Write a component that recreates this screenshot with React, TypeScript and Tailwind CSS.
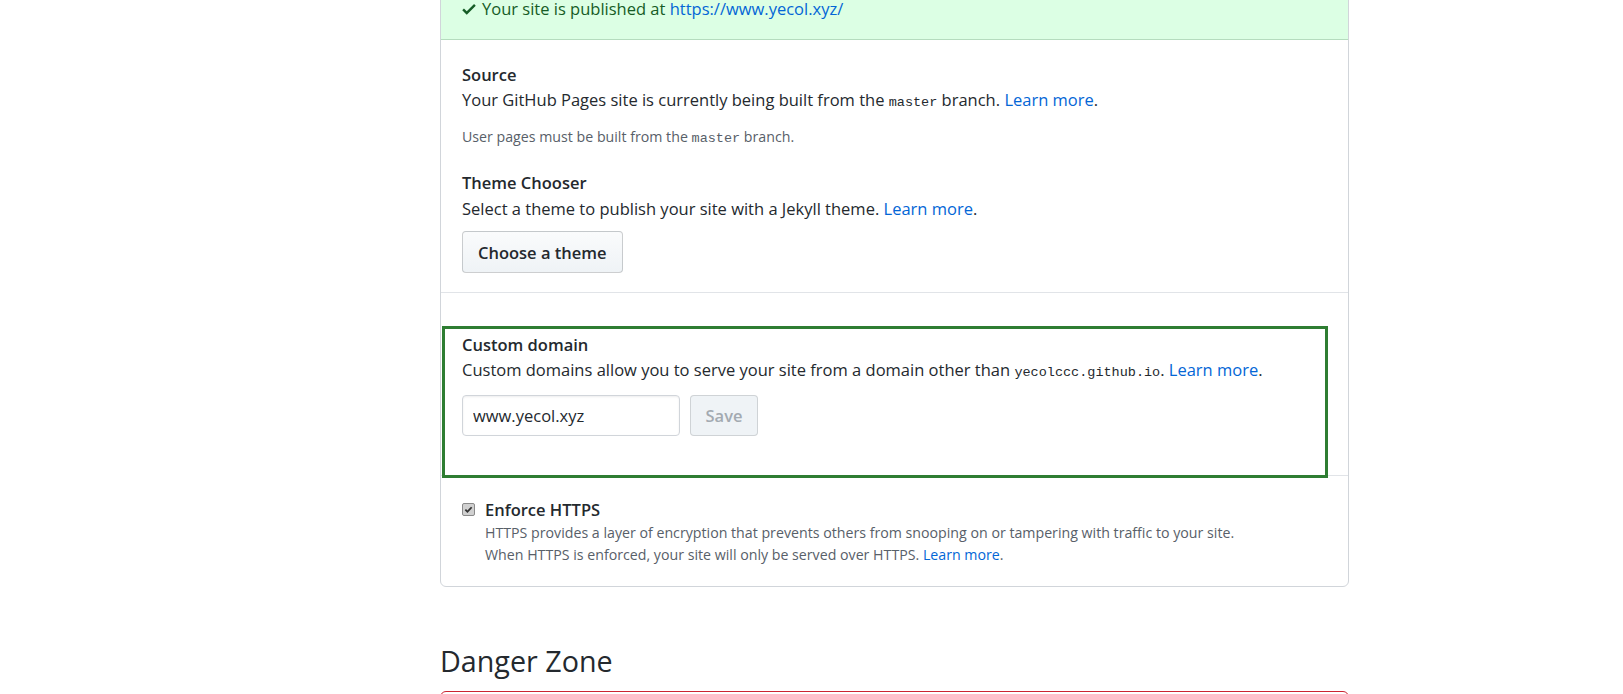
const CheckIcon = () => (
  <svg width="14" height="18" viewBox="0 0 12 16" className="fill-[#165c26] shrink-0">
    <path fillRule="evenodd" d="M12 5l-8 8-4-4 1.5-1.5L4 10l6.5-6.5L12 5z" />
  </svg>
);

const Code = ({ children }: { children: string }) => (
  <code className="font-['Liberation_Mono',monospace] text-[13.5px] leading-none">{children}</code>
);

const Link = ({ children }: { children: string }) => (
  <a className="text-[#0366d6] cursor-pointer">{children}</a>
);

export default function App() {
  return (
    <div className="h-[694px] overflow-hidden bg-white font-['Open_Sans',sans-serif] text-[#24292e] text-[16.5px] leading-[25px]">
      <div className="flex">
        <div className="w-[440px] shrink-0" />
        <div className="w-[909px] shrink-0 -mt-[28px] flex flex-col">
          <div className="border border-[#d1d5da] rounded-md flex flex-col">
            {/* published banner */}
            <div className="bg-[#dcffe4] border-b border-[#b5dcbe] pt-[23px] pb-[18px] px-[21px] flex items-center gap-[6px] text-[#165c26]">
              <CheckIcon />
              <span>
                Your site is published at <Link>https://www.yecol.xyz/</Link>
              </span>
            </div>

            {/* source + theme */}
            <div className="flex flex-col items-start px-[21px] pt-[22px] pb-[19px] border-b border-[#e1e4e8]">
              <div className="font-semibold">Source</div>
              <div>
                Your GitHub Pages site is currently being built from the <Code>master</Code> branch.{' '}
                <Link>Learn more</Link>.
              </div>
              <div className="mt-[14px] text-[14.2px] leading-[22px] text-[#586069]">
                User pages must be built from the <Code>master</Code> branch.
              </div>
              <div className="mt-[22px] font-semibold">Theme Chooser</div>
              <div className="mt-[1px]">
                Select a theme to publish your site with a Jekyll theme. <Link>Learn more</Link>.
              </div>
              <button className="mt-[10px] h-[42px] px-[15px] rounded-[4px] border border-[#1b1f2333] bg-gradient-to-b from-[#fafbfc] to-[#eff3f6] font-semibold text-[#24292e]">
                Choose a theme
              </button>
            </div>

            {/* custom domain */}
            <div className="flex flex-col pt-[33px]">
              <div className="relative z-10 ml-[1px] mr-[20px] -mb-[3px] border-[3px] border-[#2e7d32] pl-[17px] pt-[3px] pb-[39px] flex flex-col items-start">
                <div className="font-semibold">Custom domain</div>
                <div>
                  Custom domains allow you to serve your site from a domain other than{' '}
                  <Code>yecolccc.github.io</Code>. <Link>Learn more</Link>.
                </div>
                <div className="mt-[13px] flex gap-[10px]">
                  <input
                    readOnly
                    value="www.yecol.xyz"
                    className="w-[218px] h-[41px] px-[10px] rounded-[4px] border border-[#d1d5da] shadow-[inset_0_1px_2px_rgba(27,31,35,0.075)] text-[#24292e] outline-none"
                  />
                  <button className="w-[68px] h-[41px] rounded-[4px] border border-[#1b1f2326] bg-[#eff3f6] text-[#a3aab1] font-semibold">
                    Save
                  </button>
                </div>
              </div>
            </div>

            {/* enforce https */}
            <div className="border-t border-[#e1e4e8] px-[21px] pt-[21px] pb-[20px] flex gap-[10px]">
              <div className="mt-[6px] w-[13px] h-[13px] shrink-0 rounded-[2px] border border-[#8a8a8a] bg-[#d0d0d0] flex items-center justify-center">
                <svg width="9" height="9" viewBox="0 0 10 10" className="fill-none stroke-[#333] stroke-[2]">
                  <path d="M1.5 5.2l2.3 2.3L8.5 2.5" />
                </svg>
              </div>
              <div className="flex flex-col">
                <div className="font-semibold">Enforce HTTPS</div>
                <div className="text-[14.2px] leading-[22px] text-[#586069]">
                  HTTPS provides a layer of encryption that prevents others from snooping on or tampering with traffic to your site.
                  <br />
                  When HTTPS is enforced, your site will only be served over HTTPS. <Link>Learn more</Link>.
                </div>
              </div>
            </div>
          </div>

          <h2 className="mt-[56px] text-[28.7px] leading-[36px] font-normal text-[#24292e]">Danger Zone</h2>
          <div className="mt-[12px] h-[120px] rounded-md border border-[#cb2431]" />
        </div>
      </div>
    </div>
  );
}
